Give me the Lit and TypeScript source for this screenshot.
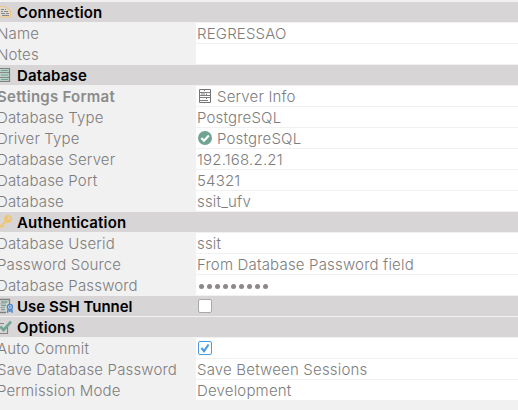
import { LitElement, html, css, svg, nothing } from "lit";
import { customElement } from "lit/decorators.js";
import { classMap } from "lit/directives/class-map.js";

type Row = {
  label: string;
  header?: boolean;
  bold?: boolean;
  tight?: boolean;
  icon?: string;
  value?: string;
  valueIcon?: string;
  check?: boolean;
  secret?: number;
};

const ROWS: Row[] = [
  { label: "Connection", header: true, icon: "connection" },
  { label: "Name", value: "REGRESSAO" },
  { label: "Notes", value: "" },
  { label: "Database", header: true, icon: "database" },
  { label: "Settings Format", bold: true, value: "Server Info", valueIcon: "server" },
  { label: "Database Type", value: "PostgreSQL" },
  { label: "Driver Type", value: "PostgreSQL", valueIcon: "ok" },
  { label: "Database Server", value: "192.168.2.21" },
  { label: "Database Port", value: "54321" },
  { label: "Database", value: "ssit_ufv" },
  { label: "Authentication", header: true, icon: "key" },
  { label: "Database Userid", value: "ssit" },
  { label: "Password Source", value: "From Database Password field" },
  { label: "Database Password", secret: 9 },
  { label: "Use SSH Tunnel", header: true, tight: true, icon: "tunnel", check: false },
  { label: "Options", header: true, icon: "options" },
  { label: "Auto Commit", check: true },
  { label: "Save Database Password", value: "Save Between Sessions" },
  { label: "Permission Mode", value: "Development" },
];

const ICONS: Record<string, unknown> = {
  connection: svg`
    <path d="M0 3.5L4 3.5L6.5 5L10.5 7.5V14H0" fill="#e0dbd2" stroke="#efc77c" stroke-width="1.2"/>
    <path d="M1 6.5H4M5 6.5H6M1 8.5H3M4 8.5H8M1 10.5H5M6 10.5H9M2 12.5H9" stroke="#85858a" fill="none"/>`,
  database: svg`
    <path d="M0 2.5H9.5V15.5H0" fill="#bccfc7" stroke="#7f8181" stroke-width="1.2"/>
    <path d="M0 6.5H9M0 11.5H9" stroke="#858a88" fill="none"/>
    <path d="M1 4.5H8M1 9H8M1 13.5H8" stroke="#6fa693" stroke-width="1.2" fill="none"/>`,
  key: svg`
    <circle cx="8" cy="6.1" r="4.1" fill="#efc679"/>
    <path d="M6 8.2L0 14.2M1.5 12.2L3.5 14.2" stroke="#efc679" stroke-width="2.3" fill="none"/>
    <circle cx="8.8" cy="5.1" r="1.1" fill="#d6d4d5"/>`,
  tunnel: svg`
    <path d="M0 2.5H9.5V8M0 15.5H6" fill="none" stroke="#7f8181" stroke-width="1.3"/>
    <path d="M1 5H7.5M1 8.5H6M1 12.5H5" stroke="#6fa693" stroke-width="1.4" fill="none"/>
    <path d="M0 6.8H6M0 10.5H5" stroke="#a5aaa8" fill="none"/>
    <circle cx="9.9" cy="10" r="2.5" fill="#d6e2ef" stroke="#4d86c4" stroke-width="1.3"/>
    <circle cx="9.9" cy="10" r="1" fill="#4d86c4"/>
    <path d="M8.3 12.2L7.4 15.7M11.5 12.2L12.4 15.7M9.9 13V15" stroke="#4d86c4" stroke-width="1.5" fill="none"/>`,
  options: svg`
    <path d="M0 5.5H4M7.5 9V15.5H0" fill="none" stroke="#858585" stroke-width="1.2"/>
    <path d="M0.3 8.5L3.6 12L11 3.7" fill="none" stroke="#6fa693" stroke-width="2.7"/>`,
  server: svg`
    <path d="M2.5 2.5H13.5V15.5H2.5Z" fill="none" stroke="#747474"/>
    <path d="M3 5.5H13M3 8.5H13M3 10.5H13M3 13.5H11M7.5 3V4M9.5 6.5V8M5.5 8.5V9M9.5 10.5V12M4 7H8" stroke="#808080" fill="none"/>`,
  ok: svg`
    <circle cx="8" cy="9" r="7" fill="#6fa392"/>
    <path d="M4.3 9L7 11.7L11.9 6.5" fill="none" stroke="#fff" stroke-width="2.2"/>`,
};

@customElement("app-root")
export class AppRoot extends LitElement {
  static styles = css`
    :host {
      display: block;
      box-sizing: border-box;
      width: 518px;
      height: 410px;
      padding-top: 2px;
      overflow: hidden;
      background: #f1f1f1;
      color: #7d7d7d;
      font: 300 15px/22px Inter, sans-serif;
      letter-spacing: 0.16px;
    }
    .grid {
      display: flex;
      flex-direction: column;
      gap: 1px;
    }
    .row {
      display: grid;
      grid-template-columns: 196px 1fr;
      height: 20px;
      white-space: nowrap;
    }
    .label {
      display: flex;
      height: 20px;
      margin-left: -3px;
    }
    .bold .label {
      color: #8b8b8b;
      font-weight: 600;
      letter-spacing: 0.25px;
    }
    .header {
      background: #d7d5d6;
      color: #000;
      font-weight: 600;
      letter-spacing: 0.17px;
    }
    .header.tight {
      letter-spacing: 0;
    }
    .header .label {
      margin-left: 0;
    }
    .value {
      display: flex;
      height: 20px;
      background: #fff;
      padding-left: 1px;
      font-weight: 300;
      letter-spacing: 0.18px;
    }
    .header .value {
      background: none;
    }
    svg {
      flex: none;
      height: 20px;
    }
    .lead {
      width: 17px;
    }
    .inline {
      width: 20px;
    }
    .box {
      box-sizing: border-box;
      width: 14px;
      height: 14px;
      margin: 3px 0 0 1px;
      border: 1px solid #aaa9aa;
      border-radius: 2px;
      background: #fff;
    }
    .box.on {
      border-color: #4b9be4;
    }
    .box svg {
      display: block;
      width: 12px;
      height: 12px;
    }
    .dots {
      display: flex;
      align-items: center;
      gap: 3px;
      padding: 3px 0 0 2px;
    }
    .dot {
      width: 5px;
      height: 5px;
      border-radius: 50%;
      background: #8b8789;
    }
  `;

  private renderValue(row: Row) {
    if (row.check !== undefined) {
      return html`<span class=${classMap({ box: true, on: row.check })}>${row.check
        ? html`<svg viewBox="0 0 12 12"><path d="M2.4 5.8L5 9.2L9.6 2.5" fill="none" stroke="#4b9be4" stroke-width="2.1"/></svg>`
        : nothing}</span>`;
    }
    if (row.secret) {
      return html`<span class="dots">${Array.from({ length: row.secret }, () => html`<i class="dot"></i>`)}</span>`;
    }
    return html`${row.valueIcon
      ? html`<svg class="inline" viewBox="0 -1 20 20">${ICONS[row.valueIcon]}</svg>`
      : nothing}<span>${row.value}</span>`;
  }

  render() {
    return html`<div class="grid">
      ${ROWS.map(
        (row) => html`<div class=${classMap({
          row: true,
          header: !!row.header,
          bold: !!row.bold,
          tight: !!row.tight,
        })}>
          <div class="label">${row.icon
            ? html`<svg class="lead" viewBox="0 -1 17 20">${ICONS[row.icon]}</svg>`
            : nothing}<span>${row.label}</span></div>
          <div class="value">${this.renderValue(row)}</div>
        </div>`
      )}
    </div>`;
  }
}
